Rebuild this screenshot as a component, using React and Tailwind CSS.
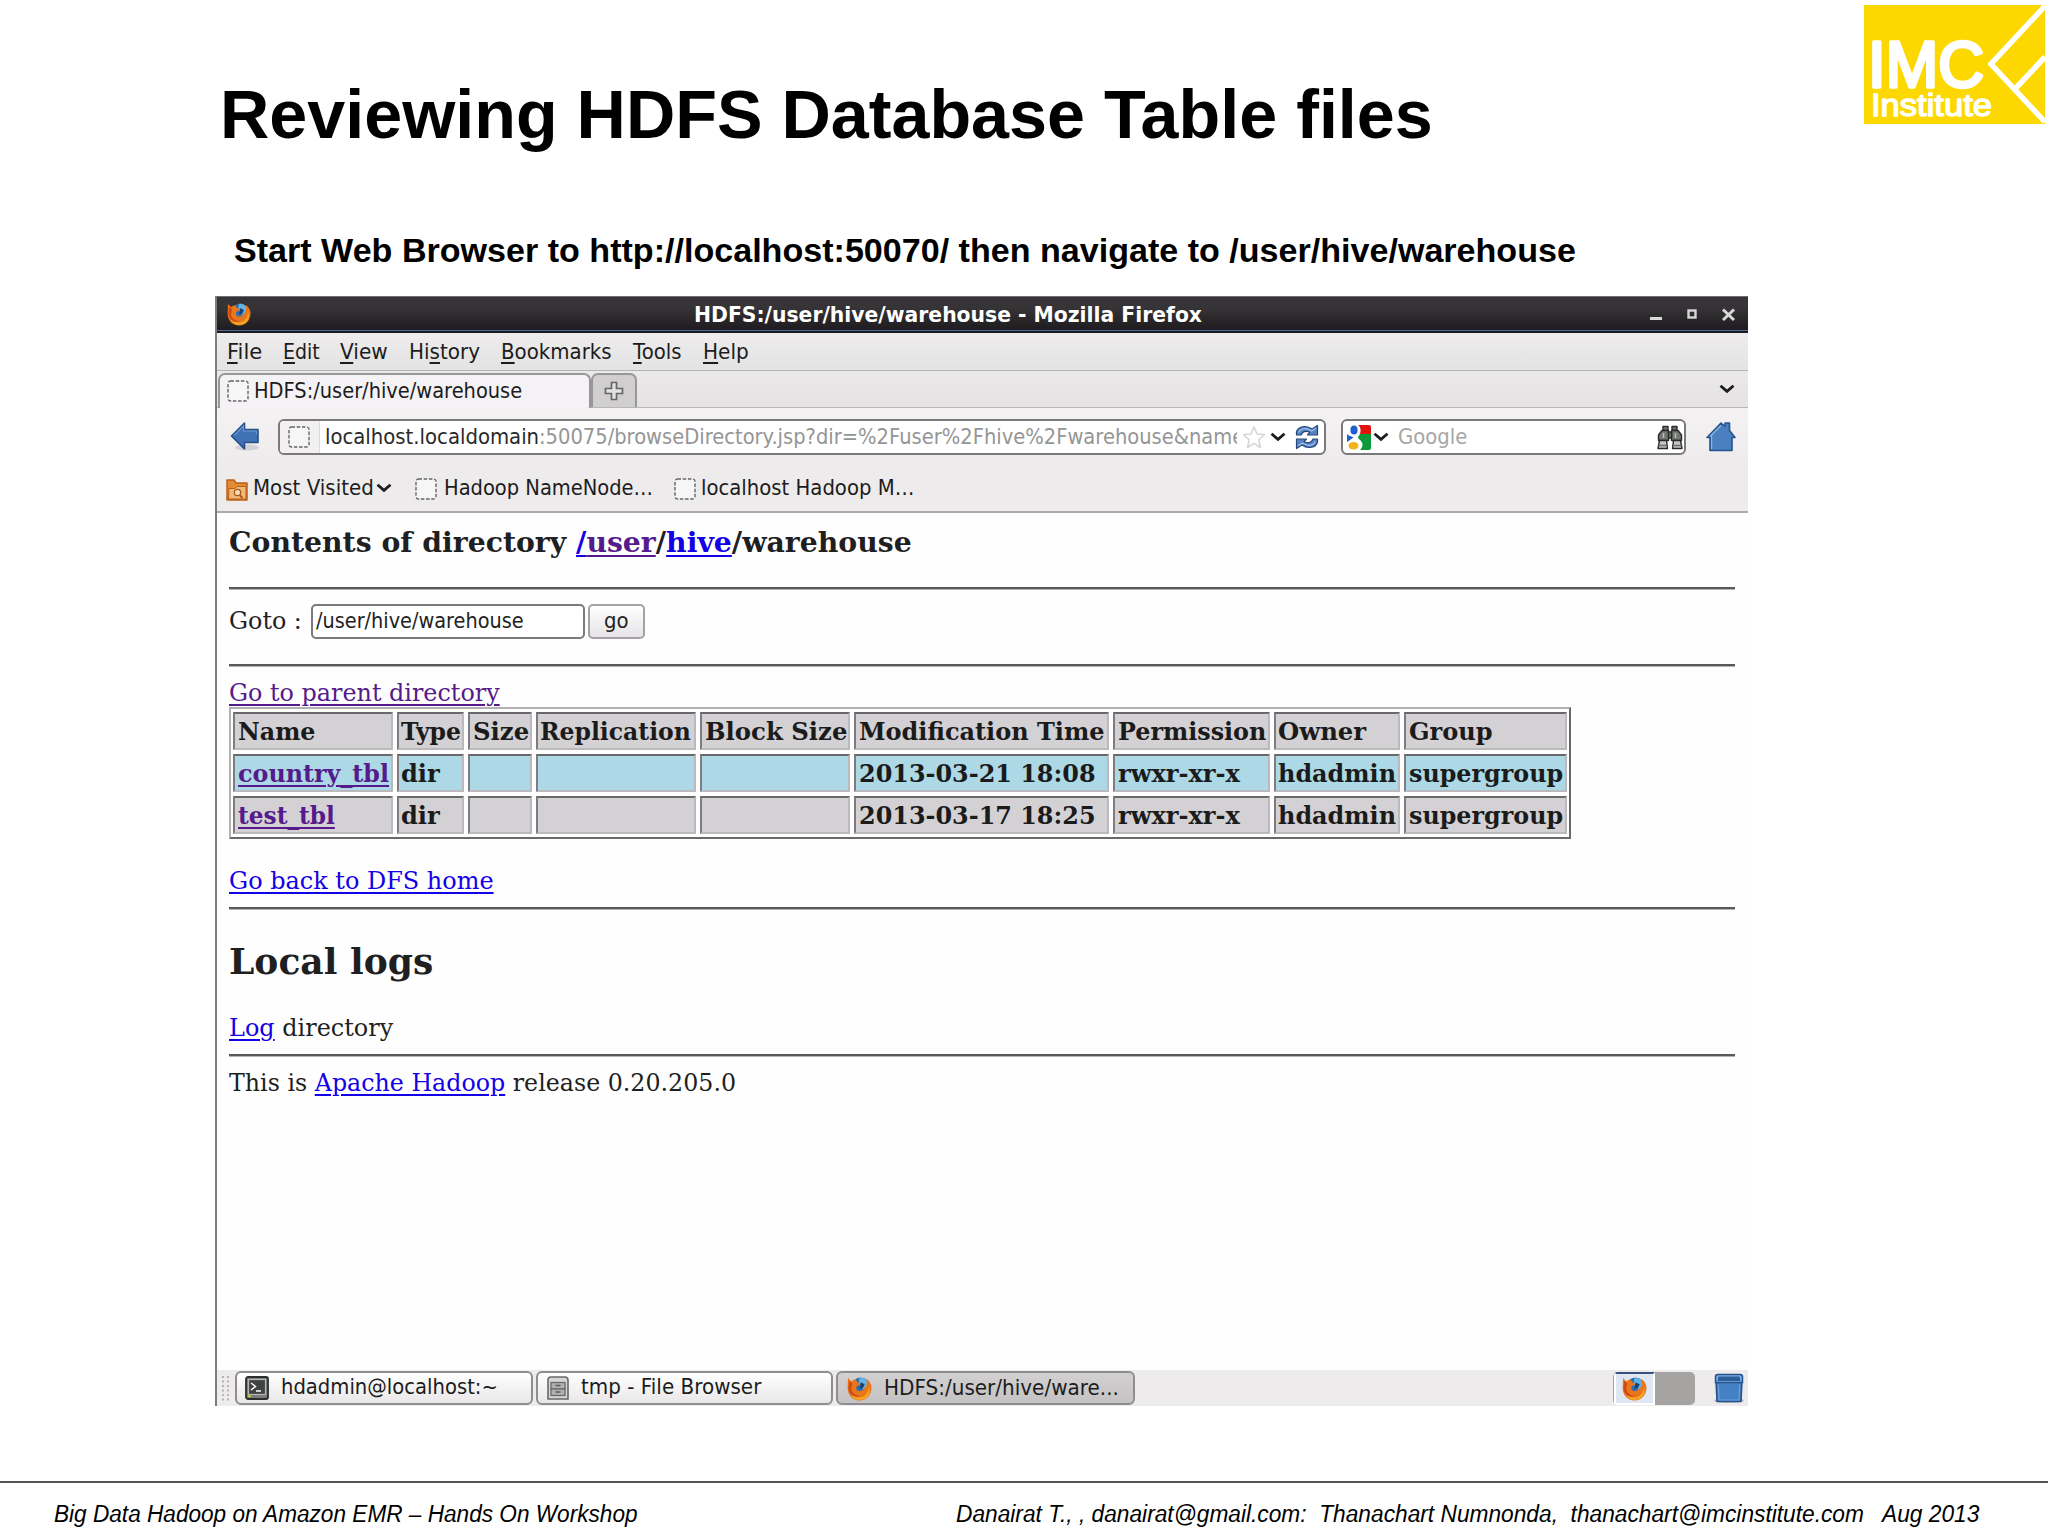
import React, { useLayoutEffect, useRef, useState } from "react";

const SANS = "font-['DejaVu_Sans',sans-serif]";
const SERIF = "font-['DejaVu_Serif',serif]";

/* One line of text whose advance is set to an exact width. */
function Fit({ w, className = "", inner = "", children }) {
  const ref = useRef(null);
  const [ratio, setRatio] = useState(1);
  useLayoutEffect(() => {
    const measure = () => {
      if (ref.current && ref.current.offsetWidth) setRatio(w / ref.current.offsetWidth);
    };
    measure();
    document.fonts?.ready.then(measure);
  }, [w]);
  return (
    <span className={`block flex-none whitespace-pre ${className}`} style={{ width: w }}>
      <span ref={ref} className={`inline-block origin-left ${inner}`} style={{ transform: `scaleX(${ratio})` }}>
        {children}
      </span>
    </span>
  );
}

function Logo() {
  return (
    <svg viewBox="0 0 181 119" className="h-[119px] w-[181px] flex-none">
      <rect width="181" height="119" fill="#fcd800" />
      <path d="M181 1 L127 59 L181 117 M151 84 L181 52" fill="none" stroke="#fff" strokeWidth="5.5" />
      <text x="4" y="82" textLength="116" lengthAdjust="spacingAndGlyphs" fill="#fff" stroke="#fff" strokeWidth="3.500" strokeLinejoin="round" fontFamily="Liberation Sans, sans-serif" fontWeight="400" fontSize="65">IMC</text>
      <text x="7" y="111" textLength="121" lengthAdjust="spacingAndGlyphs" fill="#fff" stroke="#fff" strokeWidth="1.400" strokeLinejoin="round" fontFamily="Liberation Sans, sans-serif" fontWeight="400" fontSize="32">Institute</text>
    </svg>
  );
}

function Firefox({ className }) {
  return (
    <svg viewBox="0 0 24 24" className={className}>
      <circle cx="13" cy="10.5" r="9" fill="#2f6db0" />
      <path d="M12 2 C17 1 21 5 20.5 10 L15 13 L11 8 Z" fill="#63b5e6" />
      <path d="M13 6 L17 8 L15 12 L12 12 Z" fill="#1d3f73" />
      <path d="M1 2 L4 5 L8 3 L10 6 L13 8 L9 10 L9 13 C12 16 16 14 17 11 C19 12 19 6 19 3 C23 6 24 10 23.4 13 C22.5 19.500 18 23.500 12 23.500 C5 23.500 0.500 18 0.600 11 Z" fill="#e8761c" />
      <path d="M3 9 C3 17 8 21 13 20.500 C18 20 21 15 21 10 C24 18 18 23 12 23 C5 22.500 1.500 17 3 9 Z" fill="#f5a623" />
      <path d="M2 5 L5 7 L4 13 C6 18 9 19 13 19 C7 22 1 17 1.500 11 Z" fill="#cf4a12" />
    </svg>
  );
}

function Dotted({ className = "" }) {
  return (
    <svg viewBox="0 0 22 22" className={`h-[22px] w-[22px] flex-none ${className}`}>
      <rect x="1" y="1" width="20" height="20" rx="2.500" fill="#f6f6f6" stroke="#666" strokeWidth="1.400" strokeDasharray="3.500 1.700" />
    </svg>
  );
}

function Chevron({ className = "" }) {
  return (
    <svg viewBox="0 0 16 10" className={`h-[10px] w-[16px] flex-none ${className}`}>
      <path d="M1.500 1.800 L8 7.400 L14.500 1.800" fill="none" stroke="#1c1c1c" strokeWidth="2.800" />
    </svg>
  );
}

function TitleBar() {
  return (
    <div className="flex h-[37px] items-center border-t border-t-[#6f6f6f] border-b-2 border-b-[#1a1a22] bg-linear-to-b from-[#363436] from-30% to-[#1d1b1e] pl-[10px] pr-[12px] shadow-[inset_0_-1px_0_#4d6d96]">
      <Firefox className="h-[24px] w-[24px] flex-none" />
      <Fit w={508} className="mt-px ml-[443px] text-[20.500px] leading-[32px] font-bold text-white">HDFS:/user/hive/warehouse - Mozilla Firefox</Fit>
      <svg viewBox="0 0 86 14" className="mt-px ml-auto h-[14px] w-[86px] flex-none">
        <rect x="0" y="9" width="12" height="3" fill="#d8d8d8" />
        <rect x="38.500" y="2.500" width="7" height="7" fill="none" stroke="#d8d8d8" strokeWidth="2.400" />
        <path d="M73 1.500 L84 12 M84 1.500 L73 12" stroke="#d8d8d8" strokeWidth="3" />
      </svg>
    </div>
  );
}

const MENUS = [
  ["", "F", "ile", 35, "ml-[10px]"],
  ["", "E", "dit", 37, "ml-[21px]"],
  ["", "V", "iew", 48, "ml-[20px]"],
  ["Hi", "s", "tory", 71, "ml-[21px]"],
  ["", "B", "ookmarks", 111, "ml-[21px]"],
  ["", "T", "ools", 49, "ml-[21px]"],
  ["", "H", "elp", 46, "ml-[21px]"],
];

function MenuBar() {
  return (
    <div className="flex h-[38px] items-center border-b border-[#b4b3b3] bg-linear-to-b from-[#eeecec] to-[#e4e3e3] text-[20.500px] leading-[30px] text-[#1c1c1c]">
      {MENUS.map(([a, b, c, w, gap]) => (
        <Fit key={c} w={w} className={gap}>
          {a}<span className="underline decoration-[1.5px] underline-offset-[3px]">{b}</span>{c}
        </Fit>
      ))}
    </div>
  );
}

function TabStrip() {
  return (
    <div className="flex h-[37px] items-end border-b border-[#b8b7b8] bg-linear-to-b from-[#ebe9ea] to-[#e4e2e3]">
      <div className="relative -mb-px ml-px flex h-[35px] w-[373px] flex-none items-center rounded-t-[7px] border-2 border-b-0 border-[#979797] bg-[#f4f2f4] pl-[7px] pb-px">
        <Dotted />
        <Fit w={268} className="ml-[5px] text-[20.500px] leading-[30px] text-[#1c1c1c]">HDFS:/user/hive/warehouse</Fit>
      </div>
      <div className="flex h-[34px] w-[46px] items-center justify-center rounded-t-[7px] border-2 border-b-0 border-[#979797] bg-[#d0cecf]">
        <svg viewBox="0 0 20 20" className="h-[20px] w-[20px]">
          <path d="M7.500 1.500 H12.500 V7.500 H18.500 V12.500 H12.500 V18.500 H7.500 V12.500 H1.500 V7.500 H7.500 Z" fill="#e4e2e3" stroke="#666" strokeWidth="1.700" />
        </svg>
      </div>
      <Chevron className="mr-[13px] mb-[13px] ml-auto" />
    </div>
  );
}

function NavBar() {
  return (
    <div className="flex h-[57px] items-start bg-linear-to-b from-[#f4f2f3] to-[#edebec] pt-[11px]">
      <svg viewBox="0 0 30 30" className="mt-[2px] ml-[13px] h-[30px] w-[30px] flex-none">
        <ellipse cx="17" cy="26.500" rx="12" ry="3" fill="#d2d1d3" />
        <path d="M1.500 15 L14.500 2 V8.500 H28 V21.500 H14.500 V28 Z" fill="#3f72b5" stroke="#26508a" strokeWidth="1.600" strokeLinejoin="round" />
        <path d="M4 14.500 L13.500 5 V10 H26.500 V13" fill="none" stroke="#6b97cd" strokeWidth="1.200" />
      </svg>
      <div className="ml-[18px] flex h-[36px] w-[1048px] flex-none items-center overflow-hidden rounded-[6px] border-2 border-[#7b797b] bg-white">
        <div className="flex h-full w-[40px] flex-none items-center justify-center border-r border-[#dcdadb] bg-[#f2f0f1] pr-px">
          <Dotted />
        </div>
        <div className="flex w-[917px] flex-none overflow-hidden pl-[5px] text-[20.500px] leading-[30px] text-[#959595]">
          <Fit w={214} className="text-[#2a2a2a]">localhost.localdomain</Fit>
          <Fit w={650}>:50075/browseDirectory.jsp?dir=%2Fuser%2Fhive%2Fwarehouse&amp;</Fit>
          <Fit w={55}>name</Fit>
        </div>
        <svg viewBox="0 0 24 24" className="ml-[5px] h-[25px] w-[24px] flex-none">
          <path d="M12 1.500 L15 8.500 L22.500 9.200 L16.800 14.200 L18.500 22 L12 17.800 L5.500 22 L7.200 14.200 L1.500 9.200 L9 8.500 Z" fill="#fff" stroke="#d4d4d4" strokeWidth="1.500" strokeLinejoin="round" />
        </svg>
        <Chevron className="ml-[4px]" />
        <svg viewBox="0 0 24 26" className="ml-[9px] h-[26px] w-[24px] flex-none">
          <g fill="#5583c0" stroke="#24467e" strokeWidth="1.200" strokeLinejoin="round">
            <path d="M1.500 11 V8 C3 2.500 11 0.500 17 5 L22.500 1.500 V11 H12.500 L15 8.200 C11 6.500 7.500 7.500 6 11 Z" />
            <path d="M22.500 15 V18 C21 23.500 13 25.500 7 21 L1.500 24.500 V15 H11.500 L9 17.800 C13 19.500 16.500 18.500 18 15 Z" />
          </g>
          <path d="M3.500 8.500 C6 4 11 3.500 16.500 7 L21 4 M20.500 17.500 C18 22 13 22.500 7.500 19 L3 22" fill="none" stroke="#a5c3e6" strokeWidth="1.200" />
        </svg>
      </div>
      <div className="ml-[15px] flex h-[36px] w-[345px] flex-none items-center rounded-[6px] border-2 border-[#7b797b] bg-white">
        <svg viewBox="0 0 24 25" className="ml-[4px] h-[25px] w-[24px] flex-none">
          <path d="M11 0 H22 Q24 0 24 2 V9 H13 C14 6 14 2 11 0 Z" fill="#e2120c" />
          <path d="M13 9 H24 V23 Q24 25 22 25 H13 C17 21 16 17 12 14 C10 12 12 11 13 9 Z" fill="#0c9a38" />
          <ellipse cx="7" cy="5" rx="3.600" ry="4.500" fill="#1f5fd0" />
          <path d="M0 9 C2 11 4 11 6.500 12.500 L0 17 Z" fill="#1f5fd0" />
          <ellipse cx="6.500" cy="20.800" rx="5" ry="3.800" fill="#f4b31a" />
        </svg>
        <Chevron className="ml-[2px]" />
        <Fit w={69} className="ml-[9px] text-[20.500px] leading-[30px] text-[#a6a6a6]">Google</Fit>
        <svg viewBox="0 0 26 25" className="mr-px ml-auto h-[25px] w-[26px] flex-none">
          <g fill="#737673" stroke="#2a2c2a" strokeWidth="1.400" strokeLinejoin="round">
            <rect x="6" y="1.500" width="5" height="4" />
            <rect x="15" y="1.500" width="5" height="4" />
            <path d="M5 5.500 H11.500 V15.500 H1.500 V10 Z" />
            <path d="M21 5.500 H14.500 V15.500 H24.500 V10 Z" />
            <rect x="11.500" y="7" width="3" height="6" />
            <path d="M2.500 15.500 H9.500 L10.500 23.500 H1 Z" fill="#c3c6c3" />
            <path d="M23.500 15.500 H16.500 L15.500 23.500 H25 Z" fill="#c3c6c3" />
          </g>
          <path d="M6.500 8 V13 M18.500 8 V13" stroke="#b9bcb9" strokeWidth="1.500" />
          <path d="M1.500 20.500 H10 M16 20.500 H24.500" stroke="#6a6d6a" strokeWidth="1.500" />
        </svg>
      </div>
      <svg viewBox="0 0 30 31" className="mt-[2px] ml-[20px] h-[31px] w-[30px] flex-none">
        <path d="M15 2 L19 5.500 V2 H23.500 V9.500 L29 16.500 H26 V29.500 H4 V16.500 H1 Z" fill="#4a80bf" stroke="#27538c" strokeWidth="1.600" strokeLinejoin="round" />
        <path d="M15 4.500 L4.500 15 H5.600 V28" fill="none" stroke="#8fb5de" strokeWidth="1.200" />
      </svg>
    </div>
  );
}

function BookmarksBar() {
  return (
    <div className="flex h-[48px] items-center border-b-2 border-[#acabac] bg-[#edebec] pb-px text-[20.500px] leading-[30px] text-[#1c1c1c]">
      <svg viewBox="0 0 22 22" className="mt-[4px] ml-[9px] h-[22px] w-[22px] flex-none">
        <path d="M1 1 H8 L10 4 H21 V21 H1 Z" fill="#e58a34" stroke="#b9611a" strokeWidth="1.500" strokeLinejoin="round" />
        <path d="M3 9.500 H9 L11 7.500 H20 V20 H2.500 Z" fill="#f3b878" stroke="#b9611a" strokeWidth="1" />
        <circle cx="11.500" cy="13.500" r="3.200" fill="#f8d9b3" stroke="#a85a1c" strokeWidth="1.300" />
        <path d="M13.500 16 L16.500 19" stroke="#a85a1c" strokeWidth="1.800" />
      </svg>
      <Fit w={121} className="ml-[5px]">Most Visited</Fit>
      <Chevron className="ml-[2px]" />
      <Dotted className="mt-[2px] ml-[23px]" />
      <Fit w={209} className="ml-[7px]">Hadoop NameNode…</Fit>
      <Dotted className="mt-[2px] ml-[21px]" />
      <Fit w={213} className="ml-[5px]">localhost Hadoop M…</Fit>
    </div>
  );
}

const Rule = () => <div className="h-[3px] w-[1506px] flex-none border-t-2 border-b border-t-[#5a585b] border-b-[#b5b3b6]" />;

const COLS = ["Name", "Type", "Size", "Replication", "Block Size", "Modification Time", "Permission", "Owner", "Group"];
const COL_W = [78, 60, 56, 151, 142, 246, 148, 88, 84];
const ROWS = [
  ["country_tbl", "dir", "", "", "", "2013-03-21 18:08", "rwxr-xr-x", "hdadmin", "supergroup"],
  ["test_tbl", "dir", "", "", "", "2013-03-17 18:25", "rwxr-xr-x", "hdadmin", "supergroup"],
];
const ROW_W = [
  [151, 39, 0, 0, 0, 237, 122, 118, 154],
  [97, 39, 0, 0, 0, 237, 122, 118, 154],
];

const LINE = "underline decoration-[1.5px] underline-offset-[3px]";

function Cell({ bg, w, link, children }) {
  return (
    <div className={`mr-[4px] h-[38px] border-2 border-t-[#6a686c] border-l-[#7e7c80] border-r-[#bbb9bc] border-b-[#bbb9bc] pl-[2.5px] leading-[36px] ${bg}`}>
      {children ? <Fit w={w} inner={link ? `text-[#551a8b] ${LINE}` : ""}>{children}</Fit> : null}
    </div>
  );
}

function FileTable() {
  return (
    <div className="h-[132px] w-[1342px] flex-none border-2 border-t-[#b3b1b4] border-l-[#b3b1b4] border-r-[#6a686b] border-b-[#6a686b] pt-[3px] pl-[2px] text-[23.500px] font-bold text-[#1b1b1b]">
      <div className="grid grid-cols-[163.5px_71.5px_67.5px_164.5px_154px_259px_160.500px_130.500px_167px] gap-y-[4px]">
        {COLS.map((c, i) => <Cell key={c} bg="bg-[#d4d1d4]" w={COL_W[i]}>{c}</Cell>)}
        {ROWS.map((r, j) => r.map((c, i) => (
          <Cell key={`${j}-${i}`} bg={j === 0 ? "bg-[#add8e6]" : "bg-[#d4d1d4]"} w={ROW_W[j][i]} link={i === 0}>{c}</Cell>
        )))}
      </div>
    </div>
  );
}

function Content() {
  const blue = `text-[#1400e6] ${LINE}`;
  const purple = `text-[#551a8b] ${LINE}`;
  return (
    <div className={`flex h-[857px] flex-col pl-[12px] text-[23.500px] leading-[28px] text-[#1f1f1f] ${SERIF}`}>
      <div className="flex h-[59px] flex-none items-center text-[27px] font-bold">
        <Fit w={683}>
          Contents of directory <span className={blue}>/</span><span className={purple}>user</span>/<span className={blue}>hive</span>/warehouse
        </Fit>
      </div>
      <div className="h-[15px] flex-none" />
      <Rule />
      <div className="mb-[12px] flex h-[62px] flex-none items-center">
        <Fit w={73} className="-mt-px">Goto :</Fit>
        <div className={`ml-[9px] flex h-[35px] w-[274px] items-center rounded-[5px] border-2 border-[#7b797b] bg-white pl-[3px] text-[20.500px] text-[#222] ${SANS}`}>
          <Fit w={208}>/user/hive/warehouse</Fit>
        </div>
        <div className={`ml-[3px] flex h-[35px] w-[57px] items-center justify-center rounded-[5px] border-2 border-[#a3a1a3] bg-linear-to-b from-white to-[#e6e4e6] text-[20.500px] text-[#222] ${SANS}`}>
          <Fit w={25}>go</Fit>
        </div>
      </div>
      <Rule />
      <Fit w={271} className="mt-[12px] h-[28px]" inner={purple}>Go to parent directory</Fit>
      <FileTable />
      <Fit w={265} className="mt-[28px] h-[28px]" inner={blue}>Go back to DFS home</Fit>
      <div className="h-[12px] flex-none" />
      <Rule />
      <Fit w={204} className="mt-[29px] h-[46px] text-[35px] leading-[46px] font-bold">Local logs</Fit>
      <Fit w={164} className="mt-[29px] h-[28px]"><span className={blue}>Log</span> directory</Fit>
      <div className="h-[12px] flex-none" />
      <Rule />
      <Fit w={507} className="mt-[12px] h-[28px]">This is <span className={blue}>Apache Hadoop</span> release 0.20.205.0</Fit>
    </div>
  );
}

function TaskButton({ className, w, active, icon, children }) {
  return (
    <div className={`flex h-[34px] flex-none items-center rounded-[6px] border-2 border-[#8f8d8f] ${active ? "bg-linear-to-b from-[#d2d0d1] to-[#c4c2c3]" : "bg-linear-to-b from-white to-[#e9e7e8]"} ${className}`}>
      {icon}
      <Fit w={w} className={active ? "" : "-mt-[3px]"}>{children}</Fit>
    </div>
  );
}

function TaskBar() {
  return (
    <div className="flex h-[36px] items-center bg-[#edebeb] text-[20.500px] leading-[30px] text-[#1c1c1c]">
      <svg viewBox="0 0 8 26" className="ml-[5px] h-[26px] w-[8px] flex-none" fill="#b5b3b4">
        {[1, 5.500, 10, 14.500, 19, 23.500].map((y) => (
          <g key={y}><rect x="0" y={y} width="2" height="2" /><rect x="5" y={y} width="2" height="2" /></g>
        ))}
      </svg>
      <TaskButton className="ml-[5px] w-[298px]" w={217} icon={
        <svg viewBox="0 0 24 24" className="mr-[12px] ml-[8px] h-[24px] w-[24px] flex-none">
          <rect x="1" y="1" width="22" height="22" rx="2" fill="#7a7c7a" stroke="#2c2e2c" strokeWidth="1.800" />
          <rect x="3.500" y="3.500" width="17" height="15" fill="#3f4341" stroke="#b5b7b5" strokeWidth="1.200" />
          <path d="M6 7 L10.500 10.500 L6 14 M11 15 H16" fill="none" stroke="#fff" strokeWidth="1.500" />
          <rect x="3" y="19.500" width="3" height="1.500" fill="#d8d838" />
        </svg>}>hdadmin@localhost:~</TaskButton>
      <TaskButton className="ml-[3px] w-[297px]" w={180} icon={
        <svg viewBox="0 0 22 24" className="mr-[12px] ml-[9px] h-[24px] w-[22px] flex-none">
          <path d="M1 23 V4 Q1 1 4 1 H18 Q21 1 21 4 V23 Z" fill="#d4d6d3" stroke="#686a67" strokeWidth="1.600" />
          <rect x="4" y="6.500" width="14" height="6.500" fill="#b0b2af" stroke="#686a67" strokeWidth="1.300" />
          <rect x="4" y="13" width="14" height="6.500" fill="#b0b2af" stroke="#686a67" strokeWidth="1.300" />
          <path d="M8.500 9.500 H13.500 M8.500 16 H13.500" stroke="#5c5e5b" strokeWidth="1.500" />
        </svg>}>tmp - File Browser</TaskButton>
      <TaskButton active className="ml-[3px] w-[299px]" w={235} icon={<Firefox className="mr-[12px] ml-[9px] h-[25px] w-[25px] flex-none" />}>HDFS:/user/hive/ware...</TaskButton>
      <div className="mr-[18px] ml-auto flex h-[33px] w-[82px] flex-none overflow-hidden rounded-[5px] bg-[#a5a4a3] pl-px">
        <div className="flex h-full w-[41px] items-center justify-center border-2 border-white border-t-[#35517f] bg-[#dfe7f3]">
          <Firefox className="h-[25px] w-[25px]" />
        </div>
      </div>
      <svg viewBox="0 0 32 30" className="mr-[3px] h-[30px] w-[32px] flex-none">
        <ellipse cx="16" cy="27.500" rx="15" ry="2.500" fill="#bdbcbd" />
        <path d="M3 8 H29 L28 28.500 H4 Z" fill="#4380c4" stroke="#24508b" strokeWidth="1.500" strokeLinejoin="round" />
        <path d="M5 1.500 H27 Q29.500 1.500 29.500 4 V9.500 H2.500 V4 Q2.500 1.500 5 1.500 Z" fill="#7fb0e2" stroke="#24508b" strokeWidth="1.500" />
        <path d="M5.500 3.500 H26.500 L27.500 8 H4.500 Z" fill="#2d5c99" />
        <path d="M5.500 11.500 L6 27 H26 L26.500 11.500" fill="none" stroke="#6da0d8" strokeWidth="1.200" />
      </svg>
    </div>
  );
}

export default function App() {
  return (
    <div className="flex h-[1536px] w-[2048px] flex-col overflow-hidden bg-white font-['Liberation_Sans',sans-serif] text-black">
      <header className="flex h-[296px] flex-none items-start justify-between pr-[3px] pl-[220px]">
        <div>
          <Fit w={1213} className="pt-[75px] text-[69px] leading-[80px] font-bold">Reviewing HDFS Database Table files</Fit>
          <Fit w={1342} className="mt-[75px] ml-[14px] text-[34px] leading-[40px] font-bold">Start Web Browser to http://localhost:50070/ then navigate to /user/hive/warehouse</Fit>
        </div>
        <div className="pt-[5px]"><Logo /></div>
      </header>
      <main className={`ml-[215px] flex h-[1110px] w-[1533px] flex-none flex-col border-l-2 border-[#7d7b7e] bg-[#fefefe] ${SANS}`}>
        <TitleBar />
        <MenuBar />
        <TabStrip />
        <NavBar />
        <BookmarksBar />
        <Content />
        <TaskBar />
      </main>
      <div className="h-[75px] flex-none" />
      <footer className="flex h-[55px] flex-none border-t-2 border-[#555] pt-[16px] pl-[54px] text-[23.500px] leading-[30px] italic">
        <Fit w={584}>Big Data Hadoop on Amazon EMR – Hands On Workshop</Fit>
        <Fit w={1023} className="ml-[318px]">Danairat T., , danairat@gmail.com:  Thanachart Numnonda,  thanachart@imcinstitute.com   Aug 2013</Fit>
      </footer>
    </div>
  );
}
